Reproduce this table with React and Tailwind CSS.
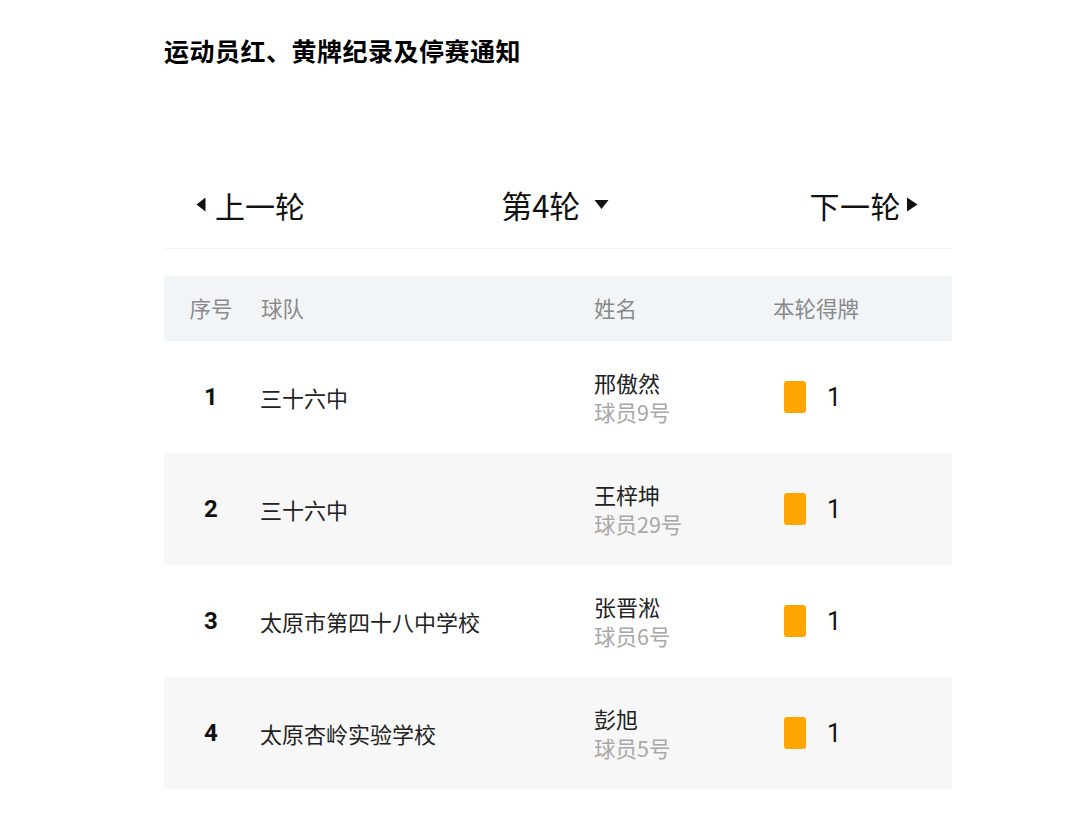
import React from 'react'

const rows = [
    { no: 1, team: '三十六中', name: '邢傲然', player: '球员9号', cards: 1 },
    { no: 2, team: '三十六中', name: '王梓坤', player: '球员29号', cards: 1 },
    { no: 3, team: '太原市第四十八中学校', name: '张晋淞', player: '球员6号', cards: 1 },
    { no: 4, team: '太原杏岭实验学校', name: '彭旭', player: '球员5号', cards: 1 },
]

const font = { fontFamily: '"Noto Sans CJK SC", "Noto Sans", sans-serif' }

const App = () => {
    return (
        <div className="min-h-screen bg-white text-[#111]" style={font}>
            <div className="ml-[164px] w-[788px]">
                {/* Title */}
                <h1 className="pt-[37px] text-[25px] leading-[26px] font-semibold tracking-[0.5px] text-black">
                    运动员红、黄牌纪录及停赛通知
                </h1>

                {/* Round switcher */}
                <div className="mt-[102px] h-[84px] pb-[4px] flex items-center justify-between pl-[32px] pr-[34px] border-b border-[#f3f3f3]">
                    <div className="flex items-center gap-[9px]">
                        <svg className="shrink-0" width="10" height="15" viewBox="0 0 10 15">
                            <path d="M9.5 0.5 L0.5 7.5 L9.5 14.5 Z" fill="#111" />
                        </svg>
                        <span className="text-[30px] leading-none">上一轮</span>
                    </div>
                    <div className="flex items-center gap-[14px] mr-[4px]">
                        <span className="text-[31px] leading-none">第4轮</span>
                        <svg className="shrink-0" width="15" height="11" viewBox="0 0 15 11">
                            <path d="M0.5 1 L14.5 1 L7.5 10 Z" fill="#111" />
                        </svg>
                    </div>
                    <div className="flex items-center gap-[5px]">
                        <span className="text-[30px] leading-none tracking-[0.5px]">下一轮</span>
                        <svg className="shrink-0" width="12" height="15" viewBox="0 0 12 15">
                            <path d="M1 0.5 L11.5 7.5 L1 14.5 Z" fill="#111" />
                        </svg>
                    </div>
                </div>

                {/* Table */}
                <div className="mt-[27px]">
                    <div className="h-[65px] bg-[#f1f5f8] flex items-center text-[21.5px] text-[#8a8a8a]">
                        <div className="w-[94px] text-center">序号</div>
                        <div className="w-[336px] pl-[3px]">球队</div>
                        <div className="w-[179px]">姓名</div>
                        <div className="flex-1">本轮得牌</div>
                    </div>
                    {rows.map((r, i) => (
                        <div
                            key={r.no}
                            className={`h-[112px] flex items-center ${i % 2 === 1 ? 'bg-[#f7f7f7]' : 'bg-white'}`}
                        >
                            <div className="w-[94px] text-center text-[24px] font-bold text-[#111]" style={{ fontFamily: '"Roboto", "Noto Sans", sans-serif' }}>
                                {r.no}
                            </div>
                            <div className="w-[336px] pl-[2px] text-[22px] text-[#222]">{r.team}</div>
                            <div className="w-[179px] flex flex-col">
                                <span className="text-[22px] leading-[29px] text-[#222]">{r.name}</span>
                                <span className="text-[21.5px] leading-[29px] text-[#a8a8a8]">{r.player}</span>
                            </div>
                            <div className="flex-1 flex items-center pl-[11px]">
                                <div className="w-[22px] h-[32px] rounded-[3px] bg-[#ffa500]" />
                                <span className="ml-[21px] text-[25px] leading-none text-[#111]" style={{ fontFamily: '"Roboto", sans-serif' }}>
                                    {r.cards}
                                </span>
                            </div>
                        </div>
                    ))}
                </div>
            </div>
        </div>
    )
}

export default App
